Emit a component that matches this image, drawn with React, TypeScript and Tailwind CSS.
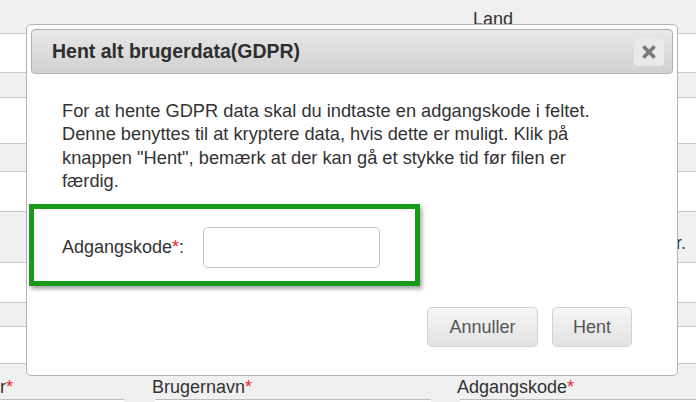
import React from "react";

function Req(): JSX.Element {
    return <span className="text-[#e8262b]">*</span>;
}

function CloseIcon(): JSX.Element {
    return (
        <svg width="14" height="14" viewBox="0 0 14 14">
            <path d="M2.5 2.5 L11.5 11.5 M11.5 2.5 L2.5 11.5" stroke="#7b7b7b" strokeWidth="3.8" strokeLinecap="round" />
        </svg>
    );
}

export default function App(): JSX.Element {
    return (
        <div className="relative w-[696px] h-[402px] overflow-hidden bg-[#f0f0f0] font-['Liberation_Sans',Arial,sans-serif] text-[18px] text-[#333]">
            {/* form behind the dialog */}
            <div className="flex flex-col">
                <div className="h-[33px] pl-[473px] pt-[9px] leading-[20px]">Land</div>
                <div className="h-[40px] bg-white border-y border-[#c8c8c8]" />
                <div className="h-[24px]" />
                <div className="h-[47px] bg-white border-y border-[#c8c8c8]" />
                <div className="h-[27px]" />
                <div className="h-[41px] bg-white border-y border-[#c8c8c8]" />
                <div className="h-[50px] pl-[676px] pt-[21px] leading-[20px]">r.</div>
                <div className="h-[41px] bg-white border-y border-[#c8c8c8]" />
                <div className="h-[23px]" />
                <div className="h-[38px] bg-white border-y border-[#c8c8c8]" />
                <div className="h-[35px] flex items-center leading-[20px] pt-[10px]">
                    <div className="w-[13px] flex justify-end whitespace-nowrap">
                        Nr<Req />
                    </div>
                    <div className="ml-[139px] w-[305px] whitespace-nowrap">
                        Brugernavn<Req />
                    </div>
                    <div className="whitespace-nowrap">
                        Adgangskode<Req />
                    </div>
                </div>
                <div className="flex h-[8px]">
                    <div className="w-[124px] bg-white border-t border-[#bdbdbd]" />
                    <div className="ml-[31px] w-[276px] bg-white border-t border-[#bdbdbd]" />
                    <div className="ml-[29px] flex-1 bg-white border-t border-[#bdbdbd]" />
                </div>
            </div>

            {/* dialog */}
            <div className="absolute left-[26px] top-[24px] w-[652px] h-[352px] bg-white border border-[#b4b4b4] rounded-[5px] p-[4px] flex flex-col">
                <div className="h-[45px] rounded-[4px] border border-[#b0b0b0] bg-gradient-to-b from-[#e8e8e8] to-[#d1d1d1] flex items-center justify-between pl-[20px] pr-[8px]">
                    <span className="font-bold text-[19.5px] text-[#2e2e2e]">Hent alt brugerdata(GDPR)</span>
                    <div className="w-[30px] h-[28px] rounded-[4px] bg-[#e9e9e9] flex items-center justify-center">
                        <CloseIcon />
                    </div>
                </div>

                <p className="ml-[31px] mt-[25px] leading-[23.3px] text-[18.25px]">
                    For at hente GDPR data skal du indtaste en adgangskode i feltet.
                    <br />
                    Denne benyttes til at kryptere data, hvis dette er muligt. Klik på
                    <br />
                    knappen "Hent", bemærk at der kan gå et stykke tid før filen er
                    <br />
                    færdig.
                </p>

                <div className="-ml-[2px] mt-[12px] w-[391px] h-[82px] border-[5px] border-[#179a17] shadow-[2px_3px_4px_rgba(0,0,0,0.35)] flex items-center pl-[28px] pt-[4px]">
                    <span className="w-[141px]">
                        Adgangskode<Req />:
                    </span>
                    <div className="w-[177px] h-[41px] rounded-[5px] border border-[#c4c4c4] bg-white" />
                </div>

                <div className="mt-[21px] flex justify-end gap-[14px] pr-[41px]">
                    <button className="w-[111px] h-[40px] rounded-[5px] border border-[#d2d2d2] bg-gradient-to-b from-[#f6f6f6] to-[#e2e2e2] text-[#555]">
                        Annuller
                    </button>
                    <button className="w-[80px] h-[40px] rounded-[5px] border border-[#d2d2d2] bg-gradient-to-b from-[#f6f6f6] to-[#e2e2e2] text-[#555]">
                        Hent
                    </button>
                </div>
            </div>
        </div>
    );
}
